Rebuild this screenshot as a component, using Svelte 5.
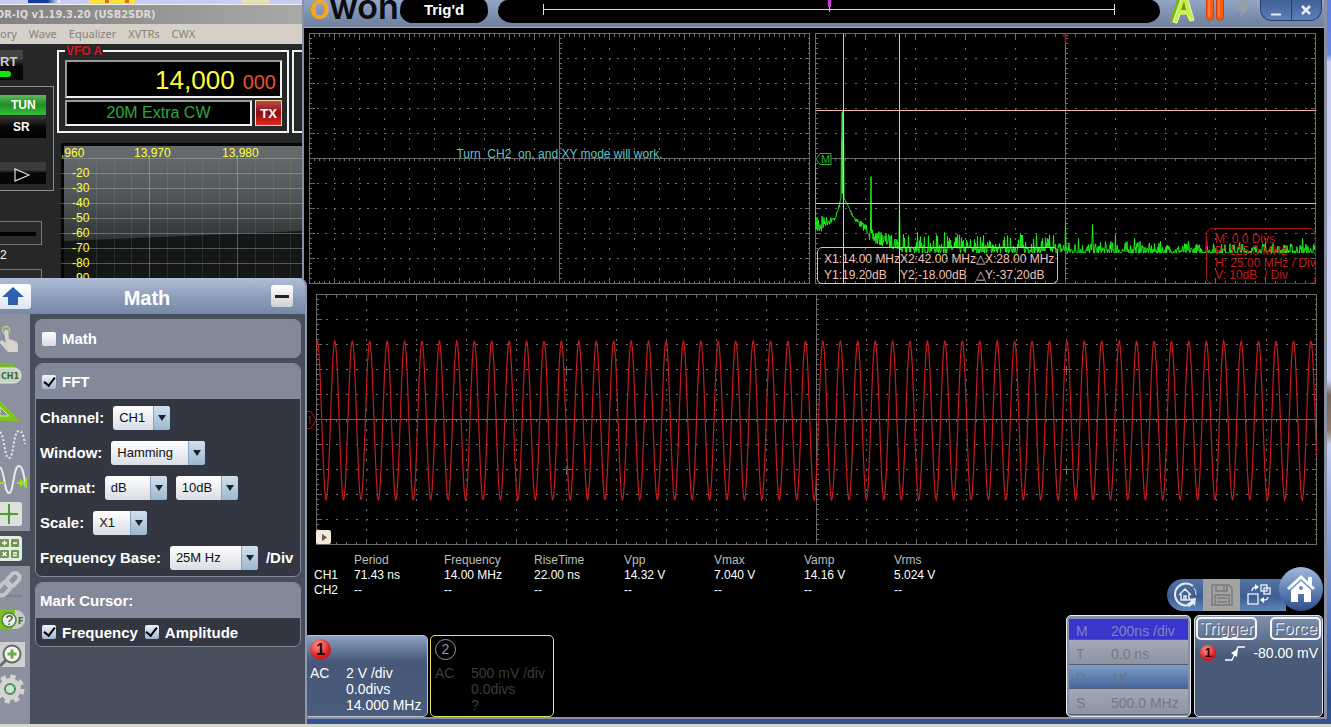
<script>
  function gridPath(w, h, colStep, rowStep, dotX, tickX) {
    const cx = w / 2, cy = h / 2;
    let d = '';
    for (let x = colStep; x < w; x += colStep) {
      if (x !== cx) for (let y = cy % 10; y < h; y += 10) d += `M${x} ${y - 1}v2`;
      d += `M${x} 0v5M${x} ${h}v-5`;
    }
    for (let y = rowStep; y < h; y += rowStep) {
      if (y !== cy) for (let x = cx % dotX; x < w; x += dotX) d += `M${(x - 1).toFixed(1)} ${y}h2`;
      d += `M0 ${y}h5M${w} ${y}h-5`;
    }
    for (let x = tickX; x < w; x += tickX) d += `M${x} 0v3M${x} ${h}v-3M${x} ${cy - 1}v3`;
    for (let y = 5; y < h; y += 5) d += `M0 ${y}h2M${w} ${y}h-2M${cx - 1} ${y}h3`;
    d += `M0 0H${w}V${h}H0ZM${cx} 0V${h}M0 ${cy}H${w}`;
    return d;
  }

  const xyGrid = gridPath(500, 250, 25, 25, 25 / 3, 5);
  const fftGrid = gridPath(500, 250, 50, 25, 10, 10);
  const waveGrid = gridPath(1000, 250, 50, 25, 10, 10);

  let wave = '';
  for (let x = 0; x <= 1000; x += 1) {
    const y = 126 - 80 * Math.cos((2 * Math.PI * (x - 0.9)) / 17.43);
    wave += `${x ? 'L' : 'M'}${x} ${y.toFixed(1)}`;
  }

  let seed = 7;
  const rand = () => {
    seed = (seed * 16807) % 2147483647;
    return seed / 2147483647;
  };
  const peaks = { 84: 170, 102: 199, 129: 199, 140: 204, 155: 206, 168: 202, 205: 200, 221: 201, 238: 202, 250: 189, 263: 205, 277: 191, 300: 201, 319: 205, 345: 208, 373: 208, 391: 202, 424: 209, 450: 208, 487: 205 };
  let spectrum = 'M0 130';
  for (let x = 0; x < 500; x += 0.5) {
    let y;
    if (x < 16) y = 192 - x * 0.4 + (rand() - 0.5) * (x > 1 && x < 8 ? 26 : 10);
    else if (x < 26) y = 187 - Math.pow((x - 16) / 10, 2) * 24 + (rand() - 0.5) * 5;
    else if (x < 27) y = 106;
    else if (x < 28.5) y = 78;
    else if (x < 30) y = 166;
    else if (x < 54) y = 164 + 34 * (1 - Math.exp(-(x - 29) / 14)) * 1.15 + (rand() - 0.5) * (3 + (x - 30) * 0.3);
    else if (x === 55.5) y = 143;
    else if (x < 84) y = 203 + (x - 55) * 0.25 + (rand() - 0.5) * 14;
    else {
      const range = x < 240 ? 19 : x < 330 ? 12 : 10;
      y = 219.5 - Math.pow(rand(), x < 250 ? 1.7 : 2.6) * range;
      if (x < 240 && (x * 2) % 2) y = Math.max(y, 214);
    }
    if (peaks[x]) y = peaks[x];
    spectrum += `L${x} ${Math.min(y, 219.5).toFixed(1)}`;
  }

  const measures = [
    ['Period', '71.43 ns'],
    ['Frequency', '14.00 MHz'],
    ['RiseTime', '22.00 ns'],
    ['Vpp', '14.32 V'],
    ['Vmax', '7.040 V'],
    ['Vamp', '14.16 V'],
    ['Vrms', '5.024 V']
  ];
  const dbMarks = [-20, -30, -40, -50, -60, -70, -80, -90];
  const timebase = [
    ['M', '200ns /div', 'on'],
    ['T', '0.0 ns', ''],
    ['D', '1K', 'blue'],
    ['S', '500.0 MHz', '']
  ];
  let mathOn = $state(false);
  let fftOn = $state(true);
  let freqCursor = $state(true);
  let ampCursor = $state(true);
</script>

{#snippet pick(id, cls, value)}
  <span class="pick {cls}"><select {id} aria-label={id}><option>{value}</option></select></span>
{/snippet}

<main class="desktop">
  <div class="icons-strip" aria-hidden="true"><i class="navy"></i><i class="gold"></i><i class="cream"></i></div>

  <section class="sdr">
    <h1>DR-IQ v1.19.3.20 (USB2SDR)</h1>
    <nav><a href="#memory">ory</a><a href="#wave">Wave</a><a href="#eq">Equalizer</a><a href="#xvtr">XVTRs</a><a href="#cwx">CWX</a></nav>
    <div class="sdr-body">
      <div class="sdr-left">
        <button class="start">RT<i></i></button>
        <div class="group">
          <button class="tun">TUN</button>
          <button class="sr">SR</button>
          <button class="play" aria-label="Play"><svg width="18" height="16" viewBox="0 0 18 16"><path d="M2 2v12l14-6z" fill="none" stroke="#ddd" stroke-width="1.2" /></svg></button>
        </div>
        <div class="slot"><i></i></div>
        <span class="two">2</span>
        <div class="slot"><i></i></div>
      </div>
      <div class="sdr-right">
        <div class="vfo-row">
          <fieldset class="vfo">
            <legend>VFO A</legend>
            <div class="freq"><span>14,000</span><small>000</small></div>
            <div class="band-row"><div class="band">20M Extra CW</div><button class="tx">TX</button></div>
          </fieldset>
          <div class="next-box"></div>
        </div>
        <div class="pan">
          <svg viewBox="0 0 241 135" preserveAspectRatio="none" aria-hidden="true">
            <defs><linearGradient id="pg" x2="0" y2="1"><stop offset="0" stop-color="#676d6f" /><stop offset=".45" stop-color="#555b5c" /><stop offset="1" stop-color="#303436" /></linearGradient></defs>
            <rect width="241" height="135" fill="#151717" />
            <path d="M2 3H241V88L2 98Z" fill="url(#pg)" />
            <path d="M0 1.500H241M1.500 0V135" stroke="#050505" stroke-width="3" />
            <path d="M0 15.500H241M0 30.500H241M0 45.500H241M0 60.500H241M0 75.500H241M0 90.500H241M0 105.500H241M0 120.500H241M88.500 16V135M176.500 16V135" stroke="#b8c4c4" stroke-opacity=".38" />
            <path d="M17.500 16V135M35.500 16V135M53.500 16V135M70.500 16V135M106.500 16V135M123.500 16V135M141.500 16V135M158.500 16V135M194.500 16V135M212.500 16V135M229.500 16V135" stroke="#b8c4c4" stroke-opacity=".13" />
          </svg>
          <div class="khz"><span>,960</span><span>13,970</span><span>13,980</span></div>
          <div class="dbs">{#each dbMarks as m}<span>{m}</span>{/each}</div>
        </div>
      </div>
    </div>
  </section>

  <section class="scope">
    <header>
      <div class="logo"><span>o</span>won</div>
      <div class="trigd">Trig'd</div>
      <div class="track"><div class="rule"><i></i></div></div>
      <div class="status">
        <svg width="26" height="24" viewBox="0 0 26 24" aria-hidden="true"><path d="M0 21L8-4h8l8 24-5 2-3-7H9l-3 8z" fill="#79b51c" /><path d="M3 22L12-4h5l7 24-4 1-3-7h-7l-3 9z" fill="#c8ee4a" stroke="#eefbb8" /><path d="M11 10l3-9 2 9z" fill="#6f9a2a" /></svg>
        <svg width="20" height="22" viewBox="0 0 20 22" aria-hidden="true"><g fill="#ff5a14" stroke="#d83c08"><rect x="1.500" y="-6" width="7" height="26" rx="3" /><rect x="11.500" y="-6" width="7" height="26" rx="3" /></g><path d="M4 0v17M14 0v17" stroke="#ff8b4a" stroke-width="1.500" /></svg>
        <svg width="18" height="22" viewBox="0 0 18 22" aria-hidden="true"><path d="M8-2h6l-3 8h5L5 19l3-9H3z" fill="#9a9da2" /></svg>
      </div>
      <div class="winbtns">
        <button aria-label="Minimize"><svg width="12" height="14" viewBox="0 0 12 14"><path d="M1 11.500h10" stroke="#e8edf5" stroke-width="2" /></svg></button>
        <button aria-label="Close"><svg width="12" height="12" viewBox="0 0 12 12"><path d="M2 2l8 8M10 2l-8 8" stroke="#e8edf5" stroke-width="2.500" /></svg></button>
      </div>
    </header>

    <div class="screen">
      <div class="plots">
        <div class="plot">
          <svg viewBox="-0.5 -0.5 501 251" preserveAspectRatio="none" aria-hidden="true"><path class="grid" d={xyGrid} /></svg>
          <p class="hint">Turn  CH2  on, and XY mode will work.</p>
        </div>
        <div class="plot">
          <svg viewBox="-0.5 -0.5 501 251" preserveAspectRatio="none" aria-hidden="true">
            <path class="grid" d={fftGrid} />
            <path d={spectrum} fill="none" stroke="#1cf01c" />
            <path d="M27 79V160" stroke="#5cd85c" stroke-width="2" />
            <path d="M28 0V250M84 0V250M0 77H500M0 170H500" stroke="#f4b8ae" shape-rendering="crispEdges" />
            <path d="M247 2h6M250 0v10" stroke="#b01818" stroke-width="1.500" />
          </svg>
          <svg class="mtag" width="17" height="14" viewBox="0 0 17 14" aria-hidden="true"><path d="M5 1.500h11v11H5L1 7z" fill="#000" stroke="#2db52d" /><text x="6" y="11">M</text></svg>
          <div class="cursors"><span>X1:14.00 MHz</span><span>X2:42.00 MHz</span><span>△X:28.00 MHz</span><span>Y1:19.20dB</span><span>Y2:-18.00dB</span><span>△Y:-37.20dB</span></div>
          <div class="fftinfo"><span>M: 0.0 Divs</span><span>F: 125.0 MHz</span><span>H: 25.00 MHz / Div</span><span>V: 10dB  / Div</span></div>
        </div>
      </div>

      <div class="plot wave">
        <svg viewBox="-0.5 -0.5 1001 251" preserveAspectRatio="none" aria-hidden="true">
          <path class="grid" d={waveGrid} />
          <path class="grid" d="M246 75h9M250 71v9M246 175h9M250 171v9M746 75h9M750 71v9M746 175h9M750 171v9" />
          <path d={wave} fill="none" stroke="#c81a1e" stroke-width="1.200" />
        </svg>
        <svg class="onetag" width="15" height="20" viewBox="0 0 15 20" aria-hidden="true"><path d="M2 1.500h5l5 8.500-5 8.500H2" fill="none" stroke="#b01818" /><path d="M6 6v8M4 8l2-2" stroke="#b01818" fill="none" /></svg>
        <button class="expand" aria-label="Expand"><svg width="8" height="8" viewBox="0 0 8 8"><path d="M2 1v7l5-3.500z" fill="#6d5448" /></svg></button>
      </div>

      <table>
        <thead><tr><th class="ch"></th>{#each measures as m}<th>{m[0]}</th>{/each}</tr></thead>
        <tbody>
          <tr><td>CH1</td>{#each measures as m}<td>{m[1]}</td>{/each}</tr>
          <tr><td>CH2</td>{#each measures as m}<td>--</td>{/each}</tr>
        </tbody>
      </table>

      <div class="bottom">
        <div class="channel ch1">
          <b class="ball big">1</b>
          <div class="chgrid"><span>AC</span><span>2 V /div</span><span></span><span>0.0divs</span><span></span><span>14.000 MHz</span></div>
        </div>
        <div class="channel ch2">
          <b class="ring">2</b>
          <div class="chgrid"><span>AC</span><span>500 mV /div</span><span></span><span>0.0divs</span><span></span><span>?</span></div>
        </div>
        <div class="right">
          <div class="tools">
            <button class="t1" aria-label="Default setup"><svg width="28" height="28" viewBox="0 0 28 28" fill="none" stroke="#e3eaf4"><path d="M22 5A11 11 0 1 0 22 22" stroke-width="2" /><path d="M23 7A9 9 0 0 1 25 14" stroke-width="1" /><path d="M8 14l6-6 6 6M10 13v6h8v-6M13 19v-4h2v4" stroke-width="1.500" /><path d="M17 18l8-1-1 8-2-2-4 3-2-3 4-3z" fill="#e3eaf4" stroke="none" /></svg></button>
            <button class="t2" aria-label="Save" disabled><svg width="22" height="24" viewBox="0 0 22 24" fill="none" stroke="#7a7a7a" stroke-width="1.500"><path d="M1 2h17l3 3v17H1z" /><path d="M5 2v6h11V2M13 3v4M4 22V12h14v10M6 15h10M6 19h10" /></svg></button>
            <button class="t3" aria-label="Switch windows"><svg width="26" height="24" viewBox="0 0 26 24" fill="none" stroke="#f0f4fa" stroke-width="1.300"><rect x="2" y="11" width="10" height="10" /><rect x="15" y="2" width="6" height="6" /><rect x="18" y="5" width="6" height="6" /><path d="M6 8c0-3 2-4 5-4M22 14c0 2-2 3-5 3" /><path d="M9 1l4 3-4 3zM18 14l-4 3 4 3z" fill="#fff" stroke="none" /></svg></button>
            <button class="home" aria-label="Home"><svg width="32" height="32" viewBox="0 0 32 32"><path d="M23 4h4v8h-4z" fill="#fff" /><path d="M3 16L16 4l13 12" fill="none" stroke="#fff" stroke-width="3" /><path d="M6 17l10-9 10 9v12h-7v-8h-6v8H6z" fill="#fff" /><circle cx="16" cy="15" r="2" fill="#6a86b4" /></svg></button>
          </div>
          <div class="boxes">
            <div class="timebase">{#each timebase as t}<div class={t[2]}><span>{t[0]}</span><span>{t[1]}</span></div>{/each}</div>
            <div class="trigger">
              <div class="tbtns"><button>Trigger</button><button>Force</button></div>
              <div class="level"><b class="ball">1</b><svg width="22" height="18" viewBox="0 0 22 18" aria-hidden="true"><path d="M1 16h7l6-13h7" fill="none" stroke="#fff" stroke-width="1.300" /><path d="M14 5l-7 4 6 4z" fill="#fff" /></svg><span>-80.00 mV</span></div>
            </div>
          </div>
        </div>
      </div>
    </div>
  </section>

  <section class="panel">
    <header>
      <button class="up" aria-label="Up"><svg width="22" height="18" viewBox="0 0 22 18"><path d="M11 0L22 10h-6v8H6v-8H0z" fill="#2e62ac" /></svg></button>
      <h2>Math</h2>
      <button class="min" aria-label="Collapse"></button>
    </header>
    <div class="cols">
      <nav class="rail">
        <button aria-label="Touch"><svg viewBox="0 0 30 34"><circle cx="6" cy="8" r="3.500" fill="none" stroke="#a9d86a" stroke-width="1.500" /><path d="M5 8c2-1 3 0 3 2l1 7 6 2c3 1 3 4 3 7v4H8L0 21c-1-2 1-3 3-2l3 2-2-11z" fill="#d8d2cf" /></svg></button>
        <button aria-label="CH1"><svg viewBox="0 0 30 34"><path d="M0 6h13l4 6H0z" fill="#76b82a" /><rect x="-8" y="11" width="29" height="15" rx="7" fill="#c9d3c4" stroke="#e8ece5" /><text x="1" y="22">CH1</text></svg></button>
        <button aria-label="Measure"><svg viewBox="0 0 30 34"><path d="M-4 4L20 29H-4z" fill="#7fc41c" /><path d="M0 15l9 9H0z" fill="#8b919e" stroke="#d3f08c" /></svg></button>
        <button aria-label="Sample"><svg viewBox="0 0 30 34"><path d="M0 5c5 4 4 26 9 26S13 4 19 4c4 0 5 8 6 13" fill="none" stroke="#e6e9ef" stroke-width="2" stroke-dasharray="2 2" /></svg></button>
        <button aria-label="Acquire"><svg viewBox="0 0 30 34"><path d="M0 5c5 4 4 26 9 26S13 4 19 4c4 0 5 10 7 22" fill="none" stroke="#e6e9ef" stroke-width="2" /><path d="M0 21h5M17 21h6" stroke="#9be01c" stroke-width="2" /><path d="M20 17l6 4-6 4zM25 16h2v10h-2z" fill="#9be01c" /></svg></button>
        <button aria-label="Cursor"><svg viewBox="0 0 30 34"><rect x="-4" y="5" width="26" height="24" rx="3" fill="#dde1dc" /><path d="M-2 17H20M9 7v20" stroke="#4e9a2c" stroke-width="2" stroke-dasharray="9 2" /><circle cx="9" cy="17" r="2" fill="#4e9a2c" /></svg></button>
        <button class="active" aria-label="Math"><svg viewBox="0 0 30 34"><rect x="-4" y="4" width="26" height="25" rx="3" fill="#e6ebe2" /><g fill="#6d9657"><rect x="0" y="7" width="9" height="8" rx="1" /><rect x="11" y="7" width="8" height="8" rx="1" /><rect x="0" y="18" width="9" height="8" rx="1" /><rect x="11" y="18" width="8" height="8" rx="1" /></g><path d="M2 11h5M4.500 8.500v5M13 11h4M2.500 20l4 4M6.500 20l-4 4M13 21h4M13 23.500h4" stroke="#fff" stroke-width="1.400" /></svg></button>
        <button aria-label="Link"><svg viewBox="0 0 30 34"><path d="M-4 29h26" stroke="#7c828e" stroke-width="2" /><g fill="none" stroke="#c3c6cb" stroke-width="4"><rect x="9" y="5" width="9" height="15" rx="4.500" transform="rotate(42 13 12)" /><rect x="0" y="14" width="9" height="15" rx="4.500" transform="rotate(42 4 21)" /></g></svg></button>
        <button aria-label="Help"><svg viewBox="0 0 30 34"><rect x="-8" y="8" width="33" height="19" rx="9" fill="#c8ccc6" /><path d="M0 8h15l-3 19H0z" fill="#78c01e" /><circle cx="9" cy="18" r="7" fill="#e9efe4" stroke="#5a7a48" stroke-width="1.500" /><path d="M7 16c0-3 5-3 5 0 0 2-3 2-3 4M9 21.500v1.500" fill="none" stroke="#4a6038" stroke-width="1.500" /><text x="18" y="22">F</text></svg></button>
        <button aria-label="Zoom"><svg viewBox="0 0 30 34"><path d="M-2 5h27v25H-2z" fill="#cfd1cf" /><circle cx="12" cy="17" r="8.500" fill="#f0f4ec" stroke="#666b6b" stroke-width="2" /><path d="M6 23l-6 6" stroke="#666b6b" stroke-width="3" /><path d="M7.500 17h9M12 12.500v9" stroke="#69b04a" stroke-width="3" /></svg></button>
        <button aria-label="Settings"><svg viewBox="0 0 30 34"><circle cx="10" cy="17" r="12" fill="none" stroke="#d4d5d2" stroke-width="5" stroke-dasharray="5 4.420" /><circle cx="10" cy="17" r="11" fill="#d4d5d2" /><circle cx="10" cy="17" r="5" fill="#c7e6cf" stroke="#4f8f5f" stroke-width="2" /></svg></button>
      </nav>
      <div class="cards">
        <div class="card solo"><label><input type="checkbox" bind:checked={mathOn} />Math</label></div>
        <div class="card">
          <div class="cap"><label><input type="checkbox" bind:checked={fftOn} />FFT</label></div>
          <div class="rows">
            <div class="row"><label for="channel">Channel:</label>{@render pick('channel', 'w57', 'CH1')}</div>
            <div class="row"><label for="window">Window:</label>{@render pick('window', 'w94', 'Hamming')}</div>
            <div class="row"><label for="format">Format:</label>{@render pick('format', 'w62', 'dB')}{@render pick('decibels', 'w62', '10dB')}</div>
            <div class="row"><label for="scale">Scale:</label>{@render pick('scale', 'w54', 'X1')}</div>
            <div class="row"><label for="base">Frequency Base:</label>{@render pick('base', 'w88', '25M Hz')}<span class="unit">/Div</span></div>
          </div>
        </div>
        <div class="card">
          <div class="cap plain">Mark Cursor:</div>
          <div class="marks"><label><input type="checkbox" bind:checked={freqCursor} />Frequency</label><label><input type="checkbox" bind:checked={ampCursor} />Amplitude</label></div>
        </div>
      </div>
    </div>
  </section>
</main>

<style>
  :global(body) { background: #d8d5cc; }
  * { box-sizing: border-box; }
  button { border: 0; padding: 0; margin: 0; font: inherit; color: inherit; background: none; }
  svg { display: block; flex: none; }
  h1, h2, p { margin: 0; }

  .desktop {
    position: relative; height: 100vh; min-height: 720px; overflow: hidden;
    font: 12px "Liberation Sans", Arial, sans-serif; color: #fff;
    background: linear-gradient(#5f80e4 0, #6686e4 54px, #c8d0f4 62px, #ccd2f4 380px, #77665f 395px, #8c7a68 430px, #c4ccf0 445px, #4a6cc0 640px, #2b4b8e 700px, #35548f 100%);
    border-bottom: 3px solid #d8d5cc;
  }
  .icons-strip { display: flex; width: 303px; height: 4px; background: #c9cdf3; padding-left: 28px; }
  .icons-strip i { height: 3px; }
  .navy { width: 32px; background: linear-gradient(90deg, #143a9e 60%, #fff); }
  .gold { width: 46px; margin-left: 29px; background: repeating-linear-gradient(90deg, #ffe23a 0 16px, #d86a1c 16px 20px); }
  .cream { width: 28px; margin-left: 106px; background: #e8e2b4; }

  .sdr { position: absolute; left: 0; top: 4px; width: 302px; height: 280px; overflow: hidden; background: #262728; border-top: 1px solid #f2f0ea; }
  .sdr h1 { height: 19px; text-indent: -4px; white-space: nowrap; font: bold 11px/20px "DejaVu Sans Condensed", "DejaVu Sans", sans-serif; color: #dcd9d4; background: linear-gradient(90deg, #818181, #a9a9a7); }
  .sdr nav { display: flex; gap: 12px; height: 20px; font: 11px/20px "Noto Sans", sans-serif; background: #d5d1c8; }
  .sdr nav a { color: #85827c; text-decoration: none; }
  .sdr-body { display: flex; }
  .sdr-left { width: 57px; padding-top: 6px; font-weight: bold; }
  .sdr-left button { display: block; text-align: left; }
  .start { width: 23px; height: 30px; background: linear-gradient(#444 0 8px, #060606 16px); color: #ccc; line-height: 18px; font-size: 13px; }
  .start i { display: block; width: 11px; height: 6px; background: #10e810; border-radius: 0 3px 3px 0; }
  .group { width: 54px; height: 105px; margin-top: 6px; padding-top: 8px; border: 1px solid #8a8a8a; border-left: 0; }
  .group button { width: 46px; }
  .group .tun { height: 20px; padding-left: 11px; background: linear-gradient(#5fb85f, #1e8f24 50%, #35c23a); }
  .group .sr { height: 22px; margin-top: 1px; padding-left: 13px; background: linear-gradient(#3a3a3a, #060606 50%, #000); }
  .group .play { height: 22px; margin-top: 24px; padding: 3px 0 0 13px; background: linear-gradient(#3c3c3c 0 8px, #050505 11px); }
  .slot { width: 42px; height: 24px; margin-top: 30px; padding: 10px 5px 0 0; border: 1px solid #777; border-left: 0; background: #2b2b2b; }
  .slot i { display: block; height: 4px; background: #000; }
  .two { display: block; height: 17px; line-height: 20px; font-weight: normal; margin-bottom: -23px; }
  .sdr-right { flex: 1; min-width: 0; }
  .vfo-row { display: flex; gap: 3px; height: 89px; }
  .vfo { width: 232px; height: 89px; margin: 0; padding: 2px 5px 0 6px; border: 2px solid #f4f4f4; min-width: 0; }
  .next-box { flex: 1; margin-top: 6px; border: 2px solid #eee; border-right: 0; }
  .vfo legend { padding: 0 1px; font-weight: bold; line-height: 14px; color: #d8141f; }
  .freq { display: flex; justify-content: flex-end; align-items: baseline; gap: 8px; height: 38px; padding: 0 4px; line-height: 37px; font-size: 26px; color: #ffff3c; background: #000; border: 2px solid #f0f0f0; border-top-color: #999; border-left-color: #999; }
  .freq small { font-size: 20px; color: #e8522c; }
  .band-row { display: flex; gap: 3px; margin-top: 2px; }
  .band { flex: 1; height: 26px; line-height: 22px; text-align: center; font-size: 16px; color: #2fa63c; background: #000; border: 2px solid #f0f0f0; border-top-color: #999; border-left-color: #999; }
  .tx { width: 27px; height: 26px; font-weight: bold; font-size: 13px; background: linear-gradient(#b84a4a, #8f0d10 50%, #e02a20); border: 1px solid #f1dc9a; }
  .pan { position: relative; margin: 10px 0 0 4px; height: 135px; overflow: hidden; color: #ffff3c; line-height: 15px; }
  .pan svg { width: 100%; height: 135px; }
  .khz { position: absolute; inset: 3px 0 auto 0; display: flex; }
  .khz span:nth-child(1) { width: 73px; }
  .khz span:nth-child(2) { width: 88px; }
  .dbs { position: absolute; left: 11px; top: 23px; display: grid; }

  .scope { position: absolute; left: 302px; right: 4px; top: 0; bottom: 5px; display: flex; flex-direction: column; border: 2px solid #8a90a4; border-top: 0; border-right-width: 3px; }
  .scope > header { display: flex; align-items: flex-start; height: 28px; padding: 0 2px 0 5px; background: linear-gradient(#94a6c6, #7486a4 80%, #76829c); border-bottom: 1px solid #a5adbd; }
  .logo { width: 91px; height: 27px; font: 600 34px/14px Inter, sans-serif; color: #0a0c10; }
  .logo span { color: #f2a51e; }
  .trigd { width: 88px; height: 23px; text-align: center; font-weight: bold; font-size: 15px; line-height: 20px; background: #000; border-radius: 5px 5px 14px 14px / 12px; }
  .track { flex: 1; height: 23px; margin-left: 10px; padding: 4px 45px 0; background: #000; border-radius: 10px 10px 16px 16px / 12px; }
  .rule { height: 11px; border: solid #e0e0e0; border-width: 0 1px; background: linear-gradient(#e0e0e0, #e0e0e0) 0 5px / 100% 1px no-repeat; display: flex; justify-content: center; }
  .rule i { width: 3px; height: 12px; margin-top: -4px; background: linear-gradient(#d03be0 60%, transparent 60%), linear-gradient(90deg, transparent 1px, #e8c93c 1px 2px, transparent 2px); }
  .status { display: flex; gap: 9px; margin: 0 8px 0 10px; }
  .winbtns { display: flex; width: 62px; height: 21px; border: 1px solid #24406e; border-top: 0; border-radius: 0 0 12px 12px; overflow: hidden; background: linear-gradient(#3f5f96, #5d80b8); }
  .winbtns button { flex: 1; display: flex; align-items: center; justify-content: center; }
  .winbtns button + button { border-left: 1px solid #24406e; }
  .screen { flex: 1; min-height: 0; display: flex; flex-direction: column; background: #000; }
  .plots { display: flex; gap: 5px; padding: 5px 8px 0 5px; }
  .plot { position: relative; flex: 1; min-width: 0; height: 251px; }
  .plot > svg:first-child { width: 100%; height: 251px; }
  .grid { fill: none; stroke: #6c6c6c; shape-rendering: crispEdges; }
  .hint { position: absolute; inset: 113px 0 auto 0; text-align: center; white-space: pre; line-height: 16px; color: #5ec8c8; }
  .mtag { position: absolute; left: 0; top: 119px; }
  .mtag text { font: 11px "Liberation Sans", sans-serif; fill: #2db52d; }
  .cursors { position: absolute; left: 2px; top: 214px; width: 241px; height: 37px; padding: 3px 0 0 6px; display: grid; grid-template-columns: 76px 76px auto; line-height: 16px; white-space: nowrap; color: #f2c4bc; border: 1px solid #f2b8ae; border-radius: 5px; }
  .fftinfo { position: absolute; right: 0; top: 195px; width: 110px; height: 56px; padding: 4px 0 0 8px; display: grid; align-content: start; line-height: 12px; white-space: pre; color: #c01c1c; border: 1px solid #b01818; border-radius: 7px; }
  .wave { flex: none; margin: 10px 7px 0 12px; }
  .onetag { position: absolute; left: -12px; top: 116px; }
  .expand { position: absolute; left: 0; top: 236px; width: 15px; height: 14px; padding-left: 4px; background: #f3e9dc; border-radius: 2px; }
  table { width: 670px; margin: 8px 0 0 10px; border-collapse: collapse; table-layout: fixed; text-align: left; }
  th, td { padding: 0; height: 15px; line-height: 15px; font-weight: normal; }
  th { color: #bdbdbd; }
  .ch { width: 40px; }
  .bottom { display: flex; flex: 1; min-height: 0; align-items: flex-end; gap: 2px; }
  .channel { width: 124px; height: 82px; padding: 3px 0 0 5px; font-size: 14px; border: 1px solid #b8c2d6; border-radius: 5px; }
  .ch1 { background: linear-gradient(#8fa2c4, #465778 32%, #4b5b7a); }
  .ch2 { color: #3c3c3c; border-color: #e8e460; padding-left: 4px; }
  .chgrid { display: grid; grid-template-columns: 36px auto; line-height: 16px; margin-top: 5px; white-space: nowrap; }
  .ball { display: block; flex: none; width: 16px; height: 16px; line-height: 16px; text-align: center; border-radius: 50%; font-size: 13px; color: #200; background: radial-gradient(circle at 40% 30%, #ff9a90, #d81e20 60%, #a80f18); }
  .ball.big { width: 21px; height: 21px; line-height: 21px; font-size: 16px; }
  .ring { display: block; width: 21px; height: 21px; line-height: 19px; text-align: center; font-weight: normal; color: #9a9a9a; border: 1px solid #9a9a9a; border-radius: 50%; }
  .right { margin-left: auto; margin-right: 1px; display: flex; flex-direction: column; align-items: flex-end; gap: 4px; }
  .tools { display: flex; align-items: flex-end; }
  .tools button { height: 32px; display: grid; place-items: center; background: linear-gradient(#5474a4, #3e5e92 55%, #5f86b8); }
  .tools .t1 { width: 36px; border-radius: 16px 0 0 16px; }
  .tools .t2 { width: 37px; background: #a3a3a3; }
  .tools .t3 { width: 46px; padding-right: 8px; }
  .tools .home { width: 44px; height: 44px; margin-left: -7px; border-radius: 50%; background: linear-gradient(#a4b9da, #6484b8 50%, #2e4e88); }
  .boxes { display: flex; gap: 3px; }
  .timebase { width: 125px; height: 102px; padding: 3px 2px 1px; display: grid; grid-template-rows: 21px 25px 24px 1fr; font-size: 14px; color: #747985; background: #8490aa; border: 1px solid #e8ebf0; border-radius: 5px; }
  .timebase div { display: grid; grid-template-columns: 35px auto; align-items: center; padding-left: 7px; padding-top: 3px; background: linear-gradient(#a4a9b6, #8d93a3); border-bottom: 1px solid #555e70; white-space: nowrap; }
  .timebase .on { background: #3a35cc; color: #8184c0; }
  .timebase .blue { background: linear-gradient(#7f9cc6, #46669c); color: #64748f; }
  .trigger { width: 129px; height: 102px; padding: 1px; background: linear-gradient(#8090b0, #495a78 40%, #4a5a78); border: 1px solid #dfe3ea; border-radius: 5px; }
  .tbtns { display: flex; justify-content: space-between; }
  .tbtns button { height: 23px; padding: 0 2px; font-size: 17px; line-height: 18px; color: #66718a; text-shadow: 1px 1px 0 #fff; border: 2px solid #f4f6fa; border-radius: 5px; }
  .level { display: flex; align-items: center; margin: 4px 3px 0 4px; font-size: 14px; white-space: nowrap; }
  .level svg { margin-left: 8px; }
  .level span { margin-left: auto; }

  .panel { position: absolute; left: 0; top: 278px; bottom: 0; width: 307px; display: flex; flex-direction: column; background: #464f5b; border-right: 2px solid #8f9aae; border-radius: 0 8px 0 0; overflow: hidden; font-weight: bold; font-size: 15px; }
  .panel > header { display: flex; align-items: center; height: 36px; padding-right: 12px; background: linear-gradient(#b0bdd6, #8a9ab6 60%, #7688a6); }
  .panel h2 { flex: 1; text-align: center; padding: 4px 8px 0 0; font-size: 20px; }
  .up { width: 31px; height: 25px; padding-left: 2px; background: linear-gradient(#fff, #dfe5ee); border-radius: 0 3px 3px 0; }
  .min { width: 22px; height: 22px; border-radius: 3px; background: linear-gradient(#222, #222) center / 14px 3px no-repeat, linear-gradient(#fff, #cfd1d4); }
  .cols { flex: 1; display: flex; min-height: 0; }
  .rail { width: 30px; padding-top: 7px; background: #8b919e; }
  .rail button { display: block; width: 30px; height: 35px; overflow: hidden; }
  .rail .active { background: #464f5b; }
  .rail svg { width: 30px; height: 34px; }
  .rail text { font: bold 8px "DejaVu Sans", sans-serif; fill: #3b6b33; }
  .cards { flex: 1; min-width: 0; display: flex; flex-direction: column; gap: 5px; padding: 5px 4px 0 5px; }
  .card { background: #323741; border: 1px solid #828998; border-radius: 7px; overflow: hidden; }
  .card label { display: flex; align-items: center; }
  .solo, .cap { background: #828998; padding-left: 6px; display: flex; align-items: center; }
  .solo { height: 39px; }
  .cap { height: 35px; }
  .cap.plain { padding-left: 4px; }
  .rows { padding: 1px 0 1px 4px; }
  .row { display: flex; align-items: center; height: 35px; gap: 9px; }
  .unit { margin-left: -1px; }
  .marks { display: flex; gap: 7px; height: 28px; padding-left: 6px; }
  input { appearance: none; width: 14px; height: 14px; margin: 0 6px 0 0; border-radius: 2px; background: linear-gradient(#fff, #d8dce4); display: grid; place-items: center; }
  input:checked { background: linear-gradient(#eef3f9, #9fb6cf); }
  input:checked::after { content: ""; width: 5px; height: 9px; border: solid #000; border-width: 0 2px 2px 0; transform: rotate(38deg); margin-top: -3px; }
  .pick { position: relative; display: block; height: 24px; }
  .pick::after { content: ""; position: absolute; right: 0; top: 0; width: 16px; height: 24px; pointer-events: none; border-radius: 0 3px 3px 0; background: linear-gradient(#d2e0ee, #9db6cf); border-left: 1px solid #8da3ba; }
  .pick::before { content: ""; position: absolute; z-index: 1; right: 4px; top: 9px; border: solid transparent; border-width: 6px 4px 0; border-top-color: #1a2430; pointer-events: none; }
  select { appearance: none; width: 100%; height: 24px; margin: 0; padding: 0 0 0 6px; border: 0; border-radius: 3px; font: 13px "Liberation Sans", Arial, sans-serif; color: #111; background: linear-gradient(#fff, #d9dde6); }
  .w57 { width: 57px; } .w94 { width: 94px; } .w62 { width: 62px; } .w54 { width: 54px; } .w88 { width: 88px; }
</style>
